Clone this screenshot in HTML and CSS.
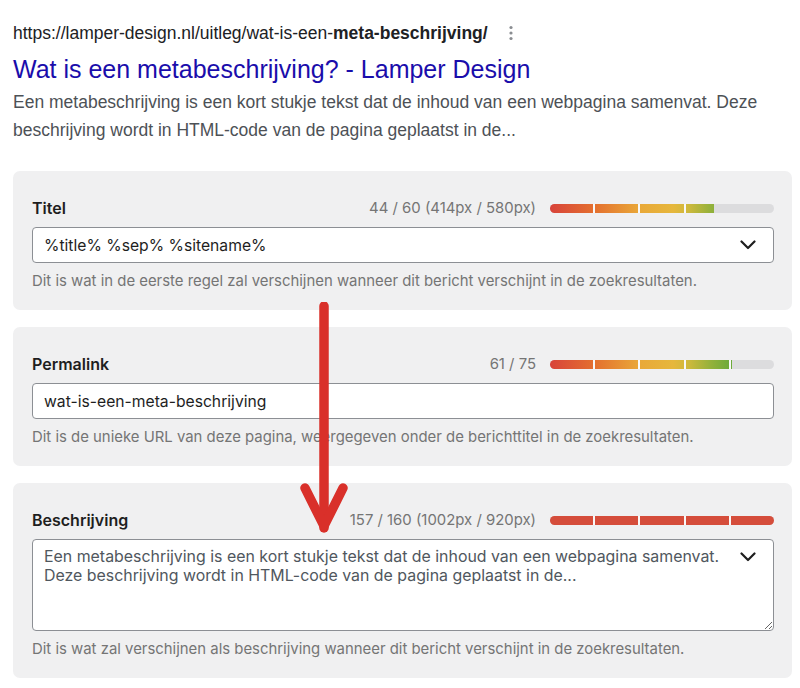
FILE: index.html
```html
<!DOCTYPE html>
<html lang="nl">
<head>
<meta charset="utf-8">
<title>Metabeschrijving</title>
<link rel="stylesheet" href="styles.css">
</head>
<body>
<div class="page">
  <div class="serp">
    <div class="serp-url">
      <span>https://lamper-design.nl/uitleg/wat-is-een-<b>meta-beschrijving/</b></span>
      <svg class="kebab" width="6" height="16" viewBox="0 0 6 16"><circle cx="3" cy="2.5" r="1.6"/><circle cx="3" cy="8" r="1.6"/><circle cx="3" cy="13.5" r="1.6"/></svg>
    </div>
    <div class="serp-title">Wat is een metabeschrijving? - Lamper Design</div>
    <p class="serp-desc">Een metabeschrijving is een kort stukje tekst dat de inhoud van een webpagina samenvat. Deze beschrijving wordt in HTML-code van de pagina geplaatst in de...</p>
  </div>

  <div class="panels">
    <section class="panel">
      <div class="panel-head">
        <span class="label">Titel</span>
        <div class="meter">
          <span class="count">44 / 60 (414px / 580px)</span>
          <div class="bar"><div class="fill" style="width:73.3%"></div></div>
        </div>
      </div>
      <div class="field">
        <input class="input" type="text" value="%title% %sep% %sitename%" readonly>
        <svg class="chev" width="16" height="10" viewBox="0 0 16 10"><path d="M1.5 1.5 L8 8 L14.5 1.5"/></svg>
      </div>
      <p class="help">Dit is wat in de eerste regel zal verschijnen wanneer dit bericht verschijnt in de zoekresultaten.</p>
    </section>

    <section class="panel">
      <div class="panel-head">
        <span class="label">Permalink</span>
        <div class="meter">
          <span class="count">61 / 75</span>
          <div class="bar"><div class="fill" style="width:81.3%"></div></div>
        </div>
      </div>
      <div class="field">
        <input class="input" type="text" value="wat-is-een-meta-beschrijving" readonly>
      </div>
      <p class="help">Dit is de unieke URL van deze pagina, weergegeven onder de berichttitel in de zoekresultaten.</p>
    </section>

    <section class="panel">
      <div class="panel-head">
        <span class="label">Beschrijving</span>
        <div class="meter">
          <span class="count">157 / 160 (1002px / 920px)</span>
          <div class="bar"><div class="fill over" style="width:100%"></div></div>
        </div>
      </div>
      <div class="field">
        <textarea class="area" readonly>Een metabeschrijving is een kort stukje tekst dat de inhoud van een webpagina samenvat. Deze beschrijving wordt in HTML-code van de pagina geplaatst in de...</textarea>
        <svg class="chev chev-area" width="16" height="10" viewBox="0 0 16 10"><path d="M1.5 1.5 L8 8 L14.5 1.5"/></svg>
      </div>
      <p class="help">Dit is wat zal verschijnen als beschrijving wanneer dit bericht verschijnt in de zoekresultaten.</p>
    </section>
  </div>

  <svg class="arrow" width="60" height="240" viewBox="0 0 60 240">
    <path d="M30 4 L30 226"/>
    <path d="M11 186 L30 224 L49 186"/>
  </svg>
</div>
</body>
</html>
```

FILE: styles.css
```css
* { box-sizing: border-box; }
html, body { margin: 0; padding: 0; background: #fff; }
.page {
  position: relative;
  width: 800px;
  height: 688px;
  padding: 21px 8px 0 13px;
  overflow: hidden;
}
.serp { font-family: "Liberation Sans", Arial, sans-serif; }
.serp-url {
  display: flex;
  align-items: center;
  gap: 20px;
  font-size: 17.5px;
  line-height: 24px;
  color: #202124;
}
.serp-url b { font-weight: 700; }
.kebab { fill: #8a8d91; }
.serp-title {
  margin-top: 9px;
  font-size: 25px;
  line-height: 30px;
  color: #1a0dab;
}
.serp-desc {
  margin: 4px 0 0;
  font-size: 17.5px;
  line-height: 28px;
  color: #4d5156;
  width: 770px;
}
.panels {
  margin-top: 27px;
  display: flex;
  flex-direction: column;
  gap: 17px;
  width: 779px;
}
.panel {
  background: #f0f0f1;
  border-radius: 7px;
  padding: 27px 18px 20px 19px;
  font-family: Inter, "Noto Sans", sans-serif;
}
.panel-head {
  display: flex;
  justify-content: space-between;
  align-items: center;
  height: 20px;
  margin-bottom: 9px;
}
.label {
  font-size: 16px;
  font-weight: 600;
  color: #1e1e1e;
}
.meter {
  display: flex;
  align-items: center;
  gap: 14px;
}
.count {
  font-size: 14.9px;
  color: #757575;
}
.bar {
  width: 224px;
  height: 9px;
  border-radius: 5px;
  background: #dcdcde;
  overflow: hidden;
}
.fill {
  position: relative;
  height: 100%;
  background: linear-gradient(to right, #d8433a 0%, #e4702f 20%, #e9a838 40%, #e6b73c 55%, #cdb93c 62%, #93b13b 72%, #6eaa3a 80%, #4fa639 100%);
  background-size: 224px 100%;
}
.fill::after {
  content: "";
  position: absolute;
  inset: 0;
  background: repeating-linear-gradient(to right, transparent 0 43.2px, #f8f8f8 43.2px 45.2px);
}
.fill.over { background: #d54d3b; }
.field { position: relative; }
.input {
  display: block;
  width: 100%;
  height: 36px;
  border: 1px solid #8c8f94;
  border-radius: 4px;
  background: #fff;
  padding: 0 11px;
  font-family: Inter, "Noto Sans", sans-serif;
  font-size: 15.7px;
  color: #1e1e1e;
  outline: none;
}
.area {
  display: block;
  width: 100%;
  height: 92px;
  border: 1px solid #8c8f94;
  border-radius: 4px;
  background: #fff;
  padding: 7px 40px 0 11px;
  font-family: Inter, "Noto Sans", sans-serif;
  font-size: 15.9px;
  line-height: 19px;
  color: #50575e;
  resize: vertical;
  outline: none;
}
.chev {
  position: absolute;
  right: 18px;
  top: 13px;
  fill: none;
  stroke: #1e1e1e;
  stroke-width: 2.2;
  stroke-linecap: round;
  stroke-linejoin: round;
}
.chev-area { top: 13px; }
.help {
  margin: 9px 0 0;
  font-size: 14.9px;
  line-height: 18px;
  color: #757575;
}
.arrow {
  position: absolute;
  left: 294px;
  top: 302px;
  fill: none;
  stroke: #d9302a;
  stroke-width: 9.5;
  stroke-linecap: round;
  stroke-linejoin: round;
}
```
